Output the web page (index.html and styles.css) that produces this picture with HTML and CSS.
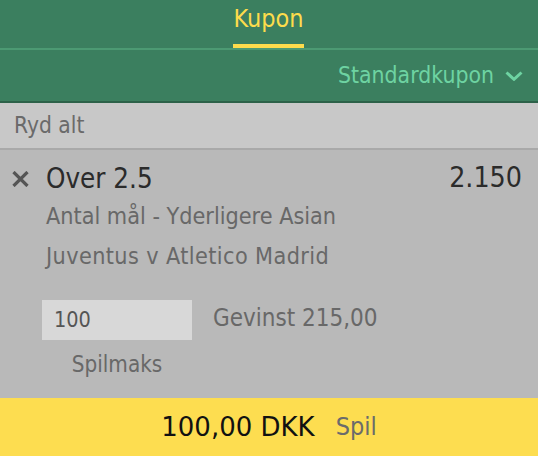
FILE: index.html
```html
<!DOCTYPE html>
<html lang="da">
<head>
<meta charset="utf-8">
<title>Kupon</title>
<link rel="stylesheet" href="styles.css">
</head>
<body>
<div class="app">
  <header class="tabs">
    <div class="tab active"><span class="tab-label">Kupon</span></div>
  </header>
  <div class="type-bar">
    <span class="type-label">Standardkupon</span>
    <svg class="chevron" width="18" height="10" viewBox="0 0 18 10" aria-hidden="true">
      <polyline points="1.5,1.5 9,8.3 16.5,1.5" fill="none" stroke="#6ed3a2" stroke-width="3" stroke-linecap="butt" stroke-linejoin="miter"/>
    </svg>
  </div>
  <div class="clear-bar">Ryd alt</div>
  <main class="slip">
    <div class="bet-head">
      <svg class="remove" width="17" height="16" viewBox="0 0 17 16" aria-hidden="true">
        <path d="M1.5 1 L15.5 15 M15.5 1 L1.5 15" stroke="#555" stroke-width="3.2" fill="none"/>
      </svg>
      <span class="selection">Over 2.5</span>
      <span class="odds">2.150</span>
    </div>
    <div class="details">
      <div class="market">Antal mål - Yderligere Asian</div>
      <div class="event">Juventus v Atletico Madrid</div>
    </div>
    <div class="stake-row">
      <div class="stake-col">
        <div class="stake-input">100</div>
        <div class="stake-max">Spilmaks</div>
      </div>
      <div class="returns">Gevinst 215,00</div>
    </div>
  </main>
  <footer class="place-bar">
    <span class="total">100,00 DKK</span>
    <span class="place">Spil</span>
  </footer>
</div>
</body>
</html>
```
FILE: styles.css
```css
html, body {
  margin: 0;
  padding: 0;
}
body {
  width: 538px;
  height: 456px;
  overflow: hidden;
  font-family: "DejaVu Sans Condensed", "DejaVu Sans", sans-serif;
  font-stretch: condensed;
}
.app {
  display: flex;
  flex-direction: column;
  height: 456px;
}
.tabs {
  background: #3b7f5f;
  height: 48px;
  border-bottom: 2px solid #4c9a73;
  display: flex;
  justify-content: center;
}
.tab {
  display: flex;
  flex-direction: column;
  height: 48px;
  box-sizing: border-box;
  border-bottom: 4px solid #fddc4c;
  margin-left: -1px;
}
.tab-label {
  color: #fddc4c;
  font-size: 25px;
  line-height: 38px;
}
.type-bar {
  background: #3b7f5f;
  height: 51px;
  border-bottom: 2px solid #2c6148;
  display: flex;
  justify-content: flex-end;
  align-items: center;
  padding-right: 15px;
  gap: 11px;
}
.type-label {
  color: #6ed3a2;
  font-size: 22.8px;
  line-height: 51px;
}
.chevron {
  margin-top: 1px;
}
.clear-bar {
  background: #c8c8c8;
  height: 45px;
  border-bottom: 2px solid #a9a9a9;
  color: #6a6a6a;
  font-size: 22.6px;
  line-height: 45px;
  padding-left: 14px;
}
.slip {
  flex: 1;
  background: #b9b9b9;
  padding-top: 12px;
}
.bet-head {
  display: flex;
  align-items: center;
  height: 32px;
  padding: 0 16px 0 12px;
}
.remove {
  flex: none;
  margin-right: 17px;
  margin-top: 2px;
}
.selection {
  color: #2b2b2b;
  font-size: 27.5px;
  line-height: 32px;
  flex: 1;
}
.odds {
  color: #2b2b2b;
  font-size: 28.3px;
  line-height: 32px;
}
.details {
  margin-top: 2px;
  padding-left: 46px;
  color: #686868;
  font-size: 23.2px;
  line-height: 40px;
}
.event {
  letter-spacing: 0.4px;
}
.stake-row {
  display: flex;
  align-items: flex-start;
  margin-top: 24px;
  padding-left: 42px;
  gap: 21px;
}
.stake-col {
  display: flex;
  flex-direction: column;
  width: 150px;
}
.stake-input {
  background: #d8d8d8;
  height: 40px;
  line-height: 40px;
  padding-left: 12px;
  color: #555;
  font-size: 21.5px;
}
.stake-max {
  margin-top: 9px;
  text-align: center;
  color: #686868;
  font-size: 22.3px;
  line-height: 30px;
}
.returns {
  color: #686868;
  font-size: 24px;
  line-height: 36px;
}
.place-bar {
  background: #fddd50;
  height: 58px;
  display: flex;
  justify-content: center;
  align-items: center;
  gap: 21px;
}
.total {
  color: #111;
  font-family: "DejaVu Sans", sans-serif;
  font-stretch: normal;
  font-size: 26px;
  line-height: 58px;
}
.place {
  color: #6b6b6b;
  font-size: 25px;
  line-height: 58px;
}
```
